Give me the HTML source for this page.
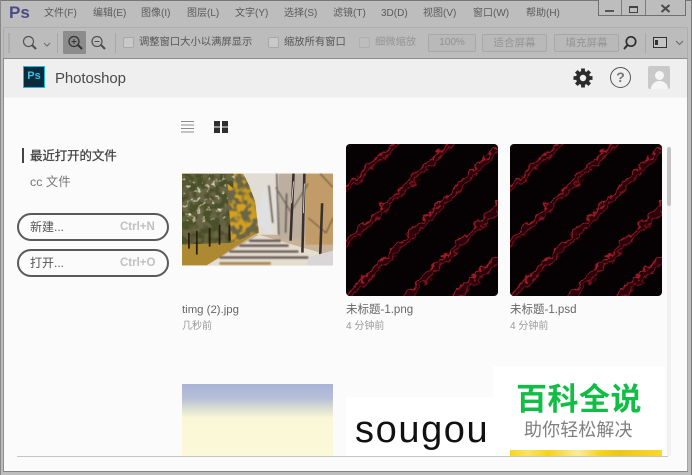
<!DOCTYPE html>
<html><head><meta charset="utf-8"><style>
*{box-sizing:border-box}
html,body{margin:0;padding:0}
body{width:692px;height:475px;overflow:hidden;position:relative;background:#bdbdbd;font-family:"Liberation Sans","Noto Sans CJK SC",sans-serif}
#w{position:absolute;left:0;top:0;width:692px;height:475px;overflow:hidden;filter:blur(.35px)}
.a{position:absolute;white-space:nowrap}
.m{top:7px;font-size:10px;line-height:14px;color:#5a5a5a}
.t{font-size:10.3px;line-height:14px;color:#555}
.cb{position:absolute;top:37px;width:11px;height:11px;background:#c9c9c9;border:1px solid #a8a8a8;border-radius:2px}
.btn{position:absolute;top:34px;height:18px;background:#b9b9b9;border:1px solid #a8a8a8;border-radius:2px;color:#909090;font-size:10px;line-height:16px;text-align:center}
.pill{position:absolute;left:17px;width:152px;height:28px;border:2px solid #5a5a5a;border-radius:14px;background:#fbfbfb}
</style></head><body><div id="w">
<div class="a" style="left:0;top:0;width:692px;height:1px;background:#777"></div>
<div class="a" style="left:0;top:0;width:1px;height:475px;background:#888"></div>
<div class="a" style="left:691px;top:0;width:1px;height:475px;background:#777"></div>
<div class="a" style="left:3px;top:27px;width:685px;height:31px;background:#bcbcbc;border-top:1px solid #adadad;border-left:1px solid #adadad;border-right:1px solid #adadad;border-radius:2px 2px 0 0"></div>

<div class="a" style="left:9px;top:1px;font-size:17px;line-height:24px;font-weight:bold;color:#4b4a85">Ps</div>
<div class="a m" style="left:44px">文件(F)</div>
<div class="a m" style="left:93px">编辑(E)</div>
<div class="a m" style="left:141px">图像(I)</div>
<div class="a m" style="left:187px">图层(L)</div>
<div class="a m" style="left:235px">文字(Y)</div>
<div class="a m" style="left:284px">选择(S)</div>
<div class="a m" style="left:333px">滤镜(T)</div>
<div class="a m" style="left:381px">3D(D)</div>
<div class="a m" style="left:423px">视图(V)</div>
<div class="a m" style="left:473px">窗口(W)</div>
<div class="a m" style="left:526px">帮助(H)</div>

<div class="a" style="left:598px;top:-1px;width:88px;height:17px;border:1px solid #707070;background:#bdbdbd"></div>
<div class="a" style="left:621px;top:0;width:1px;height:15px;background:#7c7c7c"></div>
<div class="a" style="left:645px;top:0;width:1px;height:15px;background:#7c7c7c"></div>
<div class="a" style="left:605px;top:10px;width:9px;height:2px;background:#555"></div>
<div class="a" style="left:629px;top:6px;width:9px;height:7px;border:1.5px solid #444;border-top-width:2px"></div>
<svg class="a" style="left:660px;top:4px" width="11" height="9"><path d="M1.500 1L9.500 8M9.500 1L1.500 8" stroke="#4a4a4a" stroke-width="2"/></svg>

<div class="a" style="left:8px;top:33px;width:2px;height:20px;background:#aeaeae"></div>
<svg class="a" style="left:21px;top:35px" width="36" height="16" fill="none"><circle cx="7.500" cy="6.500" r="5" stroke="#565656" stroke-width="1.200"/><path d="M11 10L15 14" stroke="#4e4e4e" stroke-width="2"/><path d="M23 8L26 11L29 8" stroke="#6a6a6a"/></svg>
<div class="a" style="left:57px;top:33px;width:1px;height:20px;background:#a8a8a8"></div>
<div class="a" style="left:63px;top:31px;width:23px;height:23px;background:#8c8c8c;border-radius:1px"></div>
<svg class="a" style="left:67px;top:35px" width="16" height="15" fill="none"><circle cx="7" cy="6.500" r="5" stroke="#333" stroke-width="1.300"/><path d="M11 10L15 14" stroke="#333" stroke-width="2"/><path d="M4.500 6.500H9.500M7 4V9" stroke="#333"/></svg>
<svg class="a" style="left:90px;top:35px" width="16" height="15" fill="none"><circle cx="7" cy="6.500" r="5" stroke="#565656" stroke-width="1.300"/><path d="M11 10L15 14" stroke="#4e4e4e" stroke-width="2"/><path d="M4.500 6.500H9.500" stroke="#4e4e4e"/></svg>
<div class="a" style="left:115px;top:33px;width:1px;height:20px;background:#a8a8a8"></div>
<div class="cb" style="left:123px"></div>
<div class="a t" style="left:139px;top:36px">调整窗口大小以满屏显示</div>
<div class="cb" style="left:268px"></div>
<div class="a t" style="left:284px;top:36px">缩放所有窗口</div>
<div class="cb" style="left:359px;background:#bdbdbd;border-color:#b0b0b0"></div>
<div class="a t" style="left:375px;top:36px;color:#949494">细微缩放</div>
<div class="btn" style="left:428px;width:48px">100%</div>
<div class="btn" style="left:482px;width:65px;color:#959595;font-size:10.500px">适合屏幕</div>
<div class="btn" style="left:554px;width:65px;color:#959595;font-size:10.500px">填充屏幕</div>
<svg class="a" style="left:622px;top:35px" width="16" height="15" fill="none"><circle cx="9" cy="6.500" r="4.700" stroke="#2d2d2d" stroke-width="1.700"/><path d="M5.500 10L2 14" stroke="#2d2d2d" stroke-width="2"/></svg>
<div class="a" style="left:645px;top:33px;width:1px;height:20px;background:#a8a8a8"></div>
<div class="a" style="left:653px;top:37px;width:14px;height:11px;border:1.500px solid #333;background:#c4c4c4"><div class="a" style="left:1px;top:2px;width:3px;height:5px;background:#333"></div></div>
<svg class="a" style="left:675px;top:40px" width="10" height="6" fill="none"><path d="M1 1L4.500 4.500L8 1" stroke="#666"/></svg>

<div class="a" style="left:4px;top:58px;width:684px;height:413px;background:#fbfbfb;border-top:1px solid #8f8f8f"></div>
<div class="a" style="left:4px;top:59px;width:684px;height:38px;background:#efefef"></div>
<div class="a" style="left:4px;top:97px;width:684px;height:1px;background:#f6f6f6"></div>
<div class="a" style="left:3px;top:58px;width:1px;height:414px;background:#8d8d8d"></div>
<div class="a" style="left:687px;top:58px;width:1px;height:414px;background:#a5a5a5"></div>
<div class="a" style="left:3px;top:471px;width:685px;height:1px;background:#858585"></div>

<div class="a" style="left:23px;top:66px;width:22px;height:22px;background:#0b2a3c;border:1.500px solid #22b8dc;color:#3cc0e4;font-size:11px;font-weight:bold;line-height:19px;text-align:center">Ps</div>
<div class="a" style="left:55px;top:69px;font-size:15px;line-height:19px;color:#4a4a4a;letter-spacing:-.1px">Photoshop</div>
<svg class="a" style="left:573px;top:68px" width="20" height="20"><g stroke="#2b2b2b" stroke-width="3.800"><path d="M10 .5V19.500M.5 10H19.500M3.300 3.300L16.700 16.700M16.700 3.300L3.300 16.700"/></g><circle cx="10" cy="10" r="7" fill="#2b2b2b"/><circle cx="10" cy="10" r="3.200" fill="#efefef"/></svg>
<div class="a" style="left:610px;top:67px;width:21px;height:21px;border:1.500px solid #555;border-radius:50%;text-align:center;font-size:14px;font-weight:bold;line-height:18px;color:#777">?</div>
<div class="a" style="left:648px;top:66px;width:22px;height:23px;background:#c9c9c9;border-radius:2px;overflow:hidden"><div class="a" style="left:7px;top:5px;width:9px;height:9px;border-radius:50%;background:#f5f5f5"></div><div class="a" style="left:3px;top:15px;width:17px;height:9px;border-radius:8px 8px 0 0;background:#f5f5f5"></div></div>

<svg class="a" style="left:181px;top:120px" width="50" height="14"><path d="M0 1.500H13M0 5H13M0 8.500H13M0 12H13" stroke="#8c8c8c" stroke-width="1.100"/><path d="M33 1h6v5.500h-6zM41 1h6v5.500h-6zM33 7.500h6v5.500h-6zM41 7.500h6v5.500h-6z" fill="#2e2e2e"/></svg>

<div class="a" style="left:22px;top:148px;width:2px;height:15px;background:#444"></div>
<div class="a" style="left:30px;top:148px;font-size:12.400px;line-height:16px;color:#444;-webkit-text-stroke:.3px #444">最近打开的文件</div>
<div class="a" style="left:30px;top:174px;font-size:12.400px;line-height:16px;color:#777">cc 文件</div>
<div class="pill" style="top:213px"></div>
<div class="a" style="left:30px;top:219px;font-size:12px;line-height:16px;color:#555">新建...</div>
<div class="a" style="left:120px;top:220px;font-size:11.500px;line-height:14px;font-weight:bold;color:#c0c0c0">Ctrl+N</div>
<div class="pill" style="top:249px"></div>
<div class="a" style="left:30px;top:255px;font-size:12px;line-height:16px;color:#555">打开...</div>
<div class="a" style="left:120px;top:256px;font-size:11.500px;line-height:14px;font-weight:bold;color:#c0c0c0">Ctrl+O</div>

<svg class="a" style="left:182px;top:173px" width="151" height="93" viewBox="0 0 153 93">
<defs>
<filter id="sp" x="0" y="0" width="100%" height="100%"><feTurbulence type="fractalNoise" baseFrequency=".2" numOctaves="2" seed="9"/><feColorMatrix values="0 0 0 0 .72  0 0 0 0 .7  0 0 0 0 .52  5 0 0 0 -3"/><feGaussianBlur stdDeviation=".4"/></filter>
<filter id="sd" x="0" y="0" width="100%" height="100%"><feTurbulence type="fractalNoise" baseFrequency=".13" numOctaves="2" seed="21"/><feColorMatrix values="0 0 0 0 .14  0 0 0 0 .13  0 0 0 0 .06  6 0 0 0 -2.500"/><feGaussianBlur stdDeviation=".5"/></filter>
<filter id="so"><feGaussianBlur stdDeviation=".7"/></filter>
<clipPath id="fl"><path d="M0 0H62L68 12L74 28L78 60L52 70L0 72z"/></clipPath>
<clipPath id="gl"><path d="M0 0H58L44 30L46 48L0 50z"/></clipPath>
</defs>
<rect width="153" height="93" fill="#c8b39a"/>
<path d="M60 0H100V62H76z" fill="#e2ddd4"/>
<path d="M125 0H153V72H125z" fill="#c29c68"/>
<path d="M98 0H125V66H98z" fill="#bcaf9f"/>
<path d="M74 50L84 12L92 62z" fill="#dfe0e2"/>
<g clip-path="url(#fl)">
<rect width="80" height="73" fill="#c49a22"/>
<rect width="52" height="73" fill="#4a5028"/>
<path d="M46 10L70 30L78 60L50 70z" fill="#d29f22"/>
<rect width="80" height="73" filter="url(#sd)"/>
<g clip-path="url(#gl)"><rect width="80" height="73" filter="url(#sp)"/></g>
</g>
<path d="M0 72L50 70L76 60L25 93H0z" fill="#ad8a32"/>
<path d="M78 62L153 84V93H25z" fill="#e4decf"/>
<g filter="url(#so)"><path d="M68 68H100M58 73H108M48 79H118M38 85H128" stroke="#6c5c5c" stroke-width="2.500"/>
<path d="M38 91H90" stroke="#a98c55" stroke-width="3"/>
<path d="M96 0L98 62M106 20L105 60M88 12L92 50" stroke="#5b5450" stroke-width="1.500" fill="none"/>
<path d="M95 14L111 40M128 10L112 36M128 45L146 60L153 45M140 0L153 14" stroke="#5f4f42" fill="none"/></g>
<path d="M113 0L110 68M124 0L122 80M142 30L140 84" stroke="#37302b" stroke-width="2.600" fill="none"/>
<path d="M113 8L111 30M124 10L123 40" stroke="#e6e3dd" stroke-width=".8"/>
<path d="M15 58V82M28 55V74M38 52V72M48 52V68M7 60V76" stroke="#2a1e10" stroke-width="1.800"/>
<path d="M130 84L153 78V93H125z" fill="#d8d6d6"/>
</svg>

<svg class="a" style="left:346px;top:144px" width="152" height="152" viewBox="0 0 152 152">
<defs><clipPath id="c"><rect width="152" height="152" rx="4"/></clipPath><filter id="r" x="-10%" y="-10%" width="120%" height="120%"><feTurbulence type="fractalNoise" baseFrequency=".11" numOctaves="3" seed="7"/><feDisplacementMap in="SourceGraphic" scale="8"/><feGaussianBlur stdDeviation=".35"/></filter></defs>
<g clip-path="url(#c)"><rect width="152" height="152" fill="#060102"/>
<g filter="url(#r)" fill="none">
<g stroke-width="8" stroke="#2a0508"><path d="M-5 50L55-5M-5 106L112-8M-5 160L160-3M53 160L162 54M103 160L162 105"/></g>
<g stroke-width="1.300" stroke="#a01e25"><path d="M-5 47L55-8M-5 102L112-11M-5 156L160-7M53 156L162 50M103 156L162 101"/></g>
<g stroke-width="1.100" stroke="#7e161c"><path d="M-5 53L55-2M-5 109L112-5M-5 163L160 0M53 163L162 57M103 163L162 108"/></g>
</g></g></svg>
<svg class="a" style="left:510px;top:144px" width="152" height="152" viewBox="0 0 152 152">
<g clip-path="url(#c)"><rect width="152" height="152" fill="#060102"/>
<g filter="url(#r)" fill="none">
<g stroke-width="8" stroke="#2a0508"><path d="M-5 50L55-5M-5 106L112-8M-5 160L160-3M53 160L162 54M103 160L162 105"/></g>
<g stroke-width="1.300" stroke="#a01e25"><path d="M-5 47L55-8M-5 102L112-11M-5 156L160-7M53 156L162 50M103 156L162 101"/></g>
<g stroke-width="1.100" stroke="#7e161c"><path d="M-5 53L55-2M-5 109L112-5M-5 163L160 0M53 163L162 57M103 163L162 108"/></g>
</g></g></svg>

<div class="a" style="left:667px;top:147px;width:4px;height:59px;background:#c4c4c4;border-radius:2px"></div>
<div class="a" style="left:667px;top:206px;width:4px;height:250px;background:#f1f1f1"></div>

<div class="a" style="left:182px;top:303px;font-size:11.400px;line-height:15px;color:#666">timg (2).jpg</div>
<div class="a" style="left:182px;top:320px;font-size:10px;line-height:13px;color:#999">几秒前</div>
<div class="a" style="left:346px;top:303px;font-size:11.500px;line-height:15px;color:#666">未标题-1.png</div>
<div class="a" style="left:346px;top:320px;font-size:10px;line-height:13px;color:#999">4 分钟前</div>
<div class="a" style="left:510px;top:303px;font-size:11.500px;line-height:15px;color:#666">未标题-1.psd</div>
<div class="a" style="left:510px;top:320px;font-size:10px;line-height:13px;color:#999">4 分钟前</div>

<div class="a" style="left:182px;top:384px;width:151px;height:72px;background:linear-gradient(180deg,#a9b3d6 0,#b6bfd8 14px,#dfe3d2 26px,#faf7d6 34px,#fbf9d7 100%)"></div>
<div class="a" style="left:346px;top:397px;width:150px;height:60px;background:#fff"></div>
<div class="a" style="left:355px;top:408px;font-size:38px;line-height:44px;color:#111;letter-spacing:1.600px">sougou</div>
<div class="a" style="left:493px;top:366px;width:172px;height:90px;background:#fff"></div>
<div class="a" style="left:510px;top:450px;width:152px;height:6px;background:linear-gradient(90deg,#f7d428 0,#f9e466 12%,#f6d21c 25%,#fbeb9a 45%,#f6d21c 60%,#e9c81c 72%,#f8d82a 100%)"></div>
<div class="a" style="left:516px;top:381px;font-size:31px;line-height:38px;font-weight:bold;color:#10bd45;letter-spacing:.5px">百科全说</div>
<div class="a" style="left:524px;top:419px;font-size:18px;line-height:22px;color:#808080;letter-spacing:.1px">助你轻松解决</div>

<div class="a" style="left:17px;top:456px;width:651px;height:1px;background:#c4c4c4"></div>
</div></body></html>
